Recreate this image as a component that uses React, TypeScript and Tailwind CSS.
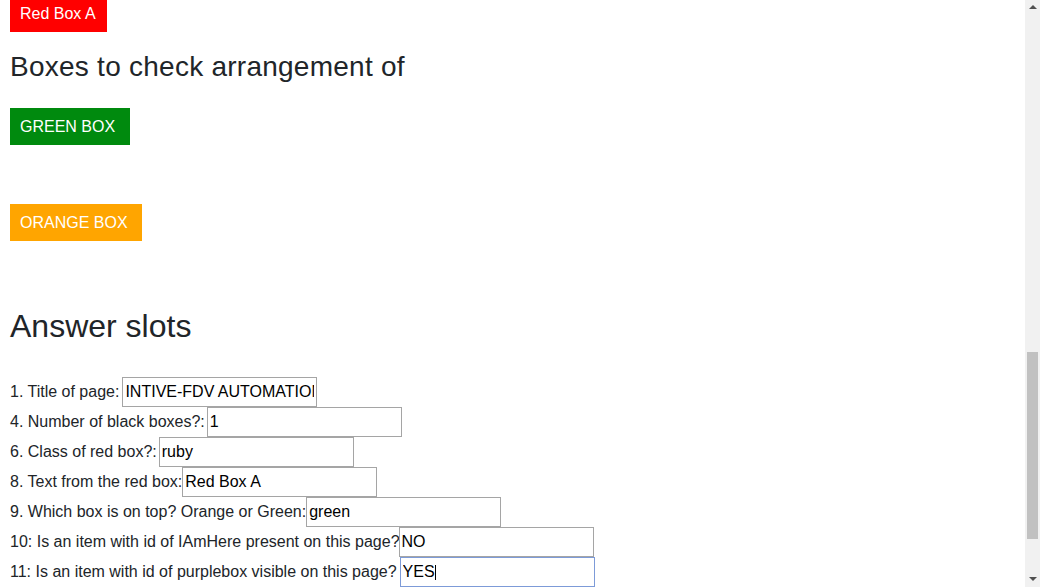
import React from 'react';

// shift: small nudge so each input lands where the reference puts it
const answers: { label: string; value: string; shift: string; focused?: boolean }[] = [
  { label: '1. Title of page:', value: 'INTIVE-FDV AUTOMATION', shift: 'ml-[3px]' },
  { label: '4. Number of black boxes?:', value: '1', shift: 'ml-[2px]' },
  { label: '6. Class of red box?:', value: 'ruby', shift: 'ml-[2px]' },
  { label: '8. Text from the red box:', value: 'Red Box A', shift: 'ml-0' },
  { label: '9. Which box is on top? Orange or Green:', value: 'green', shift: 'ml-0' },
  { label: '10: Is an item with id of IAmHere present on this page?', value: 'NO', shift: '-ml-[1px]' },
  { label: '11: Is an item with id of purplebox visible on this page?', value: 'YES', shift: 'ml-[3px]', focused: true },
];

function Scrollbar() {
  return (
    <div className="w-[15px] h-full bg-[#f1f1f1] flex flex-col items-center shrink-0">
      <div className="h-[15px] w-full flex items-center justify-center">
        <svg width="8" height="5" viewBox="0 0 8 5">
          <polygon points="0,4 4,0 8,4" fill="#505050" />
        </svg>
      </div>
      <div className="h-[337px]" />
      <div className="w-[11px] h-[187px] bg-[#c1c1c1]" />
      <div className="flex-1" />
      <div className="h-[15px] w-full flex items-center justify-center">
        <svg width="8" height="5" viewBox="0 0 8 5">
          <polygon points="0,0 8,0 4,4" fill="#505050" />
        </svg>
      </div>
    </div>
  );
}

export default function App() {
  return (
    <div
      className="w-full h-[587px] flex overflow-hidden bg-white"
      style={{ fontFamily: '"Liberation Sans", Arial, sans-serif' }}
    >
      <div className="flex-1 pl-[10px] text-[#212529] text-[16px]">
        <div className="-mt-[5px] flex">
          <div className="h-[37px] pl-[10px] pr-[11px] flex items-center bg-[#ff0000] text-white">Red Box A</div>
        </div>

        <h3 className="mt-[18px] text-[28px] leading-[34px] font-normal tracking-[0.25px]">
          Boxes to check arrangement of
        </h3>

        <div className="mt-[24px] flex">
          <div className="h-[37px] pl-[10px] pr-[14.5px] flex items-center bg-[#008a0e] text-white">GREEN BOX</div>
        </div>

        <div className="mt-[59px] flex">
          <div className="h-[37px] pl-[10px] pr-[14.5px] flex items-center bg-[#ffa500] text-white">ORANGE BOX</div>
        </div>

        <h2 className="mt-[66px] text-[32px] leading-[38px] font-normal">Answer slots</h2>

        <div className="mt-[32px] flex flex-col">
          {answers.map((a) => (
            <div key={a.label} className="h-[30px] flex items-center">
              <label className="whitespace-pre">{a.label}</label>
              <div className={`relative ${a.shift}`}>
                <input
                  readOnly
                  value={a.value}
                  className={`w-[195px] h-[30px] px-[2px] text-[16px] text-black outline-none border ${
                    a.focused ? 'border-[#7d9bd8]' : 'border-[#a5a5a5]'
                  }`}
                  style={{ fontFamily: '"Liberation Sans", Arial, sans-serif' }}
                />
                {a.focused && (
                  <span className="absolute left-[35px] top-[8px] w-px h-[15px] bg-black" />
                )}
              </div>
            </div>
          ))}
        </div>
      </div>
      <Scrollbar />
    </div>
  );
}
